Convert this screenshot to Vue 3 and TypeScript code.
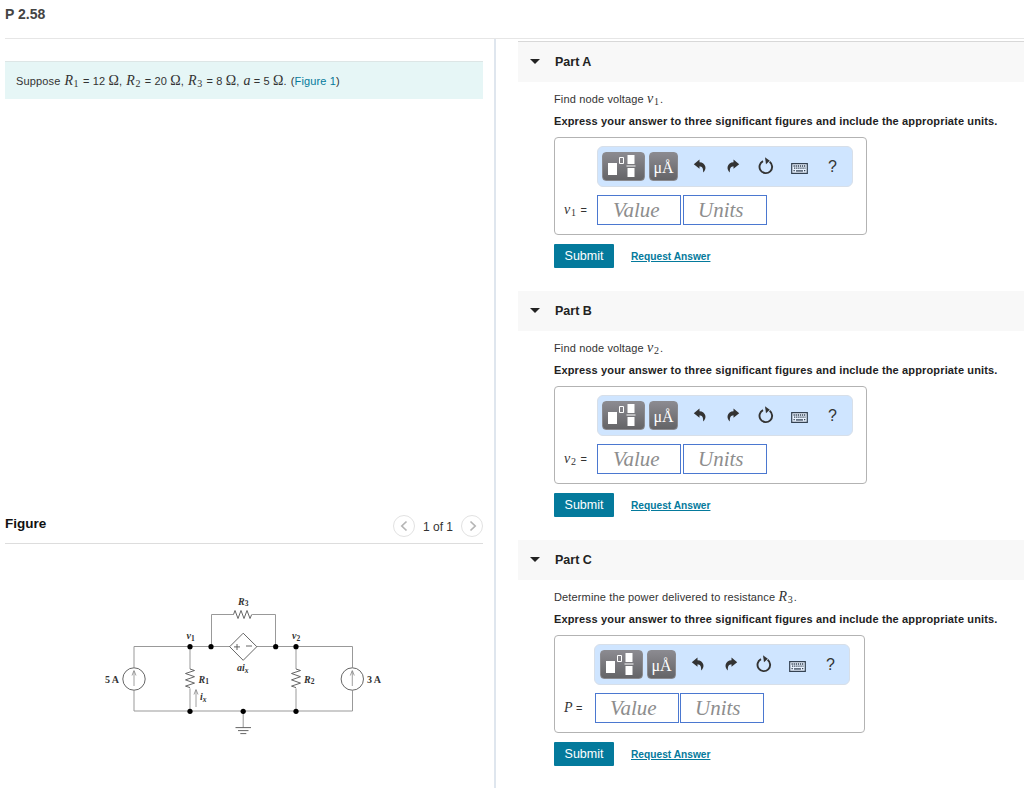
<template>
  <div class="page">
    <header class="title">P 2.58</header>
    <main class="columns">
      <section class="left">
        <div class="problem">
          <span class="lead">Suppose</span>
          <span v-for="item in givens" :key="item.name + item.sub" class="given">
            <i class="math">{{ item.name }}</i><sub v-if="item.sub">{{ item.sub }}</sub>
            = {{ item.value }} <span class="math">Ω</span>{{ item.end }}
          </span>
          <span class="ref">(<a>Figure 1</a>)</span>
        </div>
        <div class="figure-head">
          <h2>Figure</h2>
          <div class="pager">
            <button class="round" aria-label="Previous">
              <svg width="20" height="20" viewBox="0 0 20 20"><path d="M12.5 5.5 7.8 10l4.700 4.500" /></svg>
            </button>
            <span class="count">1 of 1</span>
            <button class="round" aria-label="Next">
              <svg width="20" height="20" viewBox="0 0 20 20"><path d="m8.5 5.5 4.700 4.500-4.700 4.500" /></svg>
            </button>
          </div>
        </div>
        <svg class="circuit" width="290" height="150" viewBox="100 590 290 150">
          <g class="wire">
            <path d="M134 667.5V646.5H230M256.5 646.5H352.5V667.5M352.5 690.5V711H134V690.5" />
            <path d="M211.5 646.5V614.5H233.5M252.2 614.5H275.5V646.5" />
            <path d="M190 646.5V669M190 688.4V711" />
            <path d="M296 646.5V669M296 688.4V711" />
            <path d="M243.2 711V727.5" />
          </g>
          <g class="zig">
            <path d="M233.5 614.5l1.5-4 3 8 3-8 3 8 3-8 3 8 1.7-4" />
            <path d="M190 669l4.5 1.5-9 3 9 3.2-9 3.2 9 3.2-9 3 4.5 1.5" />
            <path d="M296 669l4.5 1.5-9 3 9 3.2-9 3.2 9 3.2-9 3 4.5 1.5" />
            <path d="M243.2 633.2 256.8 646.7 243.2 660.3 229.7 646.7Z" />
            <circle cx="134" cy="679" r="11.2" />
            <circle cx="352.3" cy="679" r="11.2" />
            <path d="M234 646.9h6M237 644v6M246 646h6" />
            <path d="M235.5 727.6h15.5M238 730.6h10.5M240.3 733.6h6" />
          </g>
          <g class="arrow">
            <path d="M134 686V671M132 675.5l2-5 2 5" />
            <path d="M352.3 686V671M350.3 675.5l2-5 2 5" />
            <path d="M196 707V690M194 694.5l2-5 2 5" />
          </g>
          <circle v-for="(dot, i) in dots" :key="i" class="dot" :cx="dot[0]" :cy="dot[1]" r="2.6" />
          <g class="labels">
            <text x="105" y="682.5" textLength="14">5 A</text>
            <text x="367" y="682.5" textLength="14">3 A</text>
            <text x="238" y="604.5"><tspan class="it">R</tspan><tspan class="sub" dy="1.5">3</tspan></text>
            <text x="198.5" y="682.5"><tspan class="it">R</tspan><tspan class="sub" dy="1.5">1</tspan></text>
            <text x="304" y="682.5"><tspan class="it">R</tspan><tspan class="sub" dy="1.5">2</tspan></text>
            <text x="186.5" y="639"><tspan class="it">v</tspan><tspan class="sub" dy="1.5">1</tspan></text>
            <text x="292" y="639"><tspan class="it">v</tspan><tspan class="sub" dy="1.5">2</tspan></text>
            <text x="237" y="671" class="it">ai<tspan class="sub" dy="2">x</tspan></text>
            <text x="200" y="700" class="it">i<tspan class="sub" dy="2">x</tspan></text>
          </g>
        </svg>
      </section>

      <section class="right">
        <article v-for="part in parts" :key="part.id" class="part">
          <div class="part-head">
            <span class="caret"></span>
            <h3>Part {{ part.id }}</h3>
          </div>
          <div class="part-body">
            <p class="question">
              {{ part.question }} <i class="math">{{ part.symbol }}</i><sub>{{ part.sub }}</sub>.
            </p>
            <p class="instructions">Express your answer to three significant figures and include the appropriate units.</p>
            <div class="answer" :class="{ narrow: part.id === 'C' }">
              <div class="toolbar">
                <button class="tool templates" aria-label="Templates">
                  <svg width="43" height="29" viewBox="0 0 43 29">
                    <path fill="#fff" d="M6 11h9v12H6zM25.5 3h7v9h-7zM25.5 16h7v9h-7zM24.5 13.5h9v1h-9z" />
                    <path fill="none" stroke="#fff" d="M17.5 5.5h4v6h-4z" />
                  </svg>
                </button>
                <button class="tool units">μÅ</button>
                <svg class="icon undo" width="14" height="15" viewBox="0 0 14 15">
                  <path d="M6.5.5.8 5.2 6.5 9.8V7.2c2.4.2 4 1.6 3.6 6.4 1.9-1.6 2.7-3.8 2.3-5.8C11.8 4.9 9.500 3.300 6.500 3.200Z" />
                </svg>
                <svg class="icon redo" width="14" height="15" viewBox="0 0 14 15">
                  <path d="M7.5.5 13.2 5.2 7.5 9.8V7.2c-2.4.2-4 1.6-3.600 6.400C2 12 1.200 9.800 1.600 7.800 2.200 4.900 4.500 3.300 7.500 3.200Z" />
                </svg>
                <svg class="icon reset" width="16" height="18" viewBox="0 0 16 18">
                  <path class="ring" d="M11.600 4.800A6.300 6.300 0 1 1 5 4.200" />
                  <path d="M7 .3 11.800 3.700 8 7.200Z" />
                </svg>
                <svg class="icon keyboard" width="17" height="11" viewBox="0 0 17 11">
                  <path class="frame" d="M.7.7h15.600v9.600H.7z" />
                  <path class="keys" d="M2.5 3h12M3 5.2h11.5M2.5 7.7h1.5M13 7.7h1.5" />
                  <path class="space" d="M5 7.9h7" />
                </svg>
                <span class="help">?</span>
              </div>
              <div class="entry">
                <span class="label"><i class="math">{{ part.answer }}</i><sub v-if="part.answerSub">{{ part.answerSub }}</sub> =</span>
                <div class="field">Value</div>
                <div class="field unit">Units</div>
              </div>
            </div>
            <div class="actions">
              <button class="submit">Submit</button>
              <a class="request">Request Answer</a>
            </div>
          </div>
        </article>
      </section>
    </main>
  </div>
</template>

<script setup lang="ts">
interface Part {
  id: string
  question: string
  symbol: string
  sub: string
  answer: string
  answerSub: string
}

const givens = [
  { name: 'R', sub: '1', value: 12, end: ',' },
  { name: 'R', sub: '2', value: 20, end: ',' },
  { name: 'R', sub: '3', value: 8, end: ',' },
  { name: 'a', sub: '', value: 5, end: '.' },
]

const parts: Part[] = [
  { id: 'A', question: 'Find node voltage', symbol: 'v', sub: '1', answer: 'v', answerSub: '1' },
  { id: 'B', question: 'Find node voltage', symbol: 'v', sub: '2', answer: 'v', answerSub: '2' },
  { id: 'C', question: 'Determine the power delivered to resistance', symbol: 'R', sub: '3', answer: 'P', answerSub: '' },
]

const dots = [
  [190, 646.7],
  [211, 646.7],
  [275.7, 646.7],
  [296, 646.7],
  [190, 711.3],
  [243.2, 711.3],
  [296, 711.3],
]
</script>

<style>
body {
  margin: 0;
  background: #fff;
}
</style>

<style scoped>
.page {
  width: 1024px;
  height: 788px;
  overflow: hidden;
  font-family: 'Liberation Sans', Arial, sans-serif;
  font-size: 11px;
  color: #333;
}

.page * {
  box-sizing: border-box;
}

button {
  padding: 0;
  border: 0;
  font-family: inherit;
}

h2,
h3,
p {
  margin: 0;
}

.title {
  height: 39px;
  margin-left: 5px;
  padding-top: 6px;
  border-bottom: 1px solid #e6e6e6;
  font-size: 14px;
  line-height: 16px;
  font-weight: bold;
  color: #444;
}

.columns {
  display: flex;
  height: 749px;
}

.left {
  width: 496px;
  padding: 22px 11px 0 5px;
  border-right: 2px solid #dfe6ee;
}

.problem {
  display: flex;
  align-items: baseline;
  gap: 4px;
  height: 38px;
  padding: 10px 0 0 11px;
  border-top: 1px solid #dde6e6;
  background: #e6f6f6;
  line-height: 18px;
  letter-spacing: 0.14px;
  white-space: nowrap;
}

.math {
  font-family: 'Liberation Serif', serif;
  font-size: 14px;
}

sub {
  margin: 0 1px 0 0.5px;
  font-family: 'Liberation Serif', serif;
  font-size: 10px;
  line-height: 0;
  vertical-align: -2px;
}

a {
  color: #047a9c;
}

.figure-head {
  display: flex;
  justify-content: space-between;
  height: 30px;
  margin-top: 415px;
  border-bottom: 1px solid #ddd;
}

.figure-head h2 {
  font-size: 13.5px;
  line-height: 19px;
  color: #111;
}

.pager {
  display: flex;
  align-items: flex-start;
}

.round {
  width: 22px;
  height: 22px;
  margin-top: 1px;
  border: 1px solid #e2e2e2;
  border-radius: 50%;
  background: #fff;
}

.round svg {
  display: block;
  fill: none;
  stroke: #b5b5b5;
  stroke-width: 1.7;
}

.count {
  width: 46px;
  font-size: 12px;
  line-height: 27px;
  text-align: center;
}

.circuit {
  display: block;
  margin: 46px 0 0 95px;
}

.wire {
  fill: none;
  stroke: #999;
  stroke-width: 1;
}

.zig {
  fill: none;
  stroke: #555;
  stroke-width: 0.9;
}

.arrow {
  fill: none;
  stroke: #888;
  stroke-width: 0.8;
}

.dot {
  fill: #000;
}

.labels {
  font: bold 10px 'Liberation Serif', serif;
  fill: #333;
}

.it {
  font-style: italic;
}

.sub {
  font-size: 7.5px;
}

.right {
  flex: 1;
  padding: 2px 0 0 22px;
}

.part {
  height: 249px;
}

.part + .part {
  padding-top: 1px;
}

.part-head {
  display: flex;
  align-items: center;
  height: 40px;
  padding: 0 0 1px 12px;
  background: #f8f8f8;
}

.part:first-child .part-head {
  height: 41px;
  border-top: 1px solid #d8d8d8;
}

.caret {
  border: 5px solid transparent;
  border-top: 5px solid #222;
  border-bottom: 0;
}

.part-head h3 {
  margin-left: 15px;
  font-size: 12.5px;
  color: #222;
}

.part-body {
  padding: 7px 0 0 36px;
}

.question {
  height: 21px;
  line-height: 19px;
  letter-spacing: 0.14px;
  white-space: nowrap;
}

.instructions {
  height: 27px;
  line-height: 23px;
  font-weight: bold;
  letter-spacing: 0.145px;
  color: #222;
  white-space: nowrap;
}

.answer {
  width: 313px;
  height: 98px;
  padding: 8px 0 0 8px;
  border: 1px solid #b3b3b3;
  border-radius: 4px;
}

.toolbar {
  display: flex;
  width: 256px;
  height: 41px;
  margin-left: 34px;
  padding: 5px 0 0 4px;
  border: 1px solid #d7dfe9;
  border-radius: 6px;
  background: #cfe5ff;
}

.tool {
  height: 29px;
  border: 1px solid #8b8b90;
  border-radius: 4px;
  background: linear-gradient(#8b8a90, #646467);
  color: #fff;
}

.templates {
  width: 43px;
}

.templates svg {
  display: block;
  margin: -1px;
}

.units {
  width: 29px;
  margin-left: 4px;
  font: 16px/30px 'Liberation Serif', serif;
}

.icon {
  fill: #333;
}

.undo {
  margin: 7px 0 0 15px;
}

.redo {
  margin: 7px 0 0 19px;
}

.reset {
  margin: 5px 0 0 18px;
}

.ring {
  fill: none;
  stroke: #333;
  stroke-width: 1.9;
}

.keyboard {
  margin: 11px 0 0 17px;
}

.frame {
  fill: #e8f2ff;
  stroke: #344252;
  stroke-width: 1.2;
}

.keys {
  fill: none;
  stroke: #344252;
  stroke-width: 1.3;
  stroke-dasharray: 1.3 0.8;
}

.space {
  stroke: #566474;
  stroke-width: 1.6;
}

.help {
  margin-left: 20px;
  font-size: 16px;
  line-height: 29px;
}

.entry {
  display: flex;
  margin-top: 8px;
}

.label {
  width: 34px;
  padding-left: 1px;
  line-height: 30px;
  letter-spacing: 0.2px;
  white-space: nowrap;
}

.field {
  width: 84px;
  height: 30px;
  padding-left: 15px;
  border: 1px solid #4b78d0;
  font: italic 21px/28px 'Liberation Serif', serif;
  color: #8d8d8d;
}

.unit {
  padding-left: 14px;
  margin-left: 2px;
}

.narrow {
  width: 311px;
}

.narrow .toolbar {
  margin-left: 31px;
  padding-left: 5px;
}

.narrow .label {
  width: 32px;
}

.narrow .field {
  padding-left: 14px;
}

.narrow .unit {
  margin-left: 1px;
}

.actions {
  display: flex;
  margin-top: 9px;
}

.submit {
  width: 60px;
  height: 24px;
  border-radius: 1px;
  background: #047a9c;
  font-size: 12.5px;
  color: #fff;
}

.request {
  margin-left: 17px;
  font-size: 10.2px;
  line-height: 25px;
  font-weight: bold;
  text-decoration: underline;
}
</style>
